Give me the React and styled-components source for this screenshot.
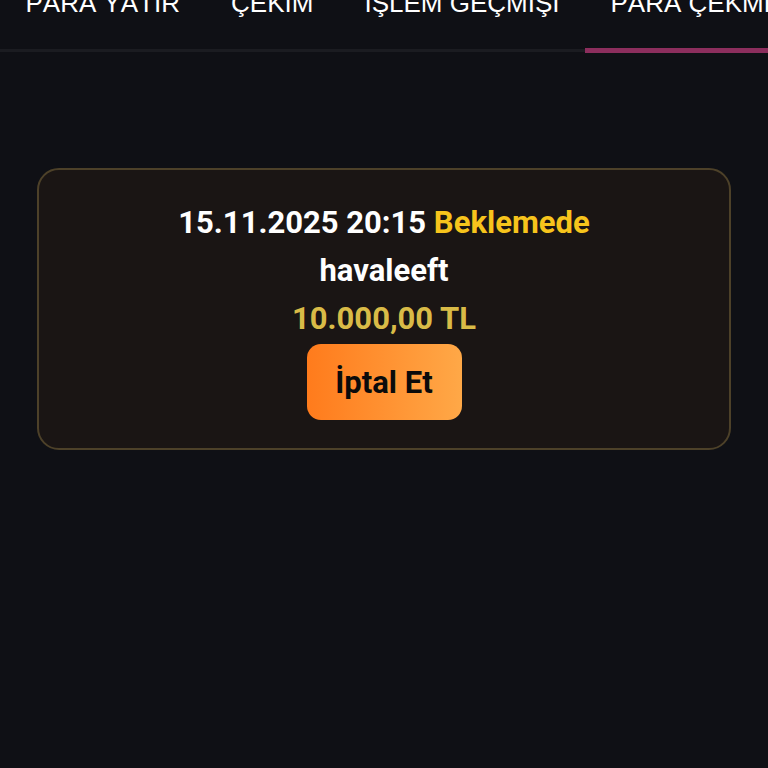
import React from "react";
import styled, { createGlobalStyle } from "styled-components";

const Global = createGlobalStyle`
  html, body { margin: 0; padding: 0; background: #0f1015; }
  body { font-family: Roboto, "Liberation Sans", sans-serif; overflow: hidden; }
  * { box-sizing: border-box; }
`;

const Page = styled.div`
  width: 768px;
  height: 768px;
  background: #0f1015;
  overflow: hidden;
`;

const TabBar = styled.div`
  display: flex;
  margin-top: -17px;
  border-bottom: 3px solid #1b1c21;
  white-space: nowrap;
`;

const Tab = styled.div`
  flex: none;
  padding: 0 25.5px 26px;
  font-family: "Liberation Sans", Arial, sans-serif;
  font-size: 26px;
  font-kerning: none;
  line-height: 40px;
  color: #ffffff;
  position: relative;
  &::after {
    content: "";
    position: absolute;
    left: 0;
    right: 0;
    bottom: -4px;
    height: 5px;
    background: ${(p) => (p.$active ? "#8c2e5d" : "transparent")};
  }
`;

const Content = styled.div`
  padding: 116px 37px 0;
`;

const Card = styled.div`
  border: 2px solid #4d4129;
  border-radius: 22px;
  background: #1a1514;
  padding: 29px 20px 28px;
  display: flex;
  flex-direction: column;
  align-items: center;
`;

const Line = styled.div`
  font-size: 31px;
  font-weight: 700;
  line-height: 48px;
  color: ${(p) => p.$color || "#ffffff"};
`;

const Status = styled.span`
  color: #f7c41c;
`;

const Button = styled.button`
  margin-top: 1px;
  width: 155px;
  height: 76px;
  border: none;
  border-radius: 14px;
  background: linear-gradient(90deg, #ff7b1c 0%, #ffa847 100%);
  color: #0b0b0b;
  font-family: Roboto, "Liberation Sans", sans-serif;
  font-size: 31px;
  font-weight: 700;
  cursor: pointer;
`;

export default function App() {
  return (
    <Page>
      <Global />
      <TabBar>
        <Tab>PARA YATIR</Tab>
        <Tab>ÇEKİM</Tab>
        <Tab>İŞLEM GEÇMİŞİ</Tab>
        <Tab $active>PARA ÇEKME TALEPLERİ</Tab>
      </TabBar>
      <Content>
        <Card>
          <Line>
            15.11.2025 20:15 <Status>Beklemede</Status>
          </Line>
          <Line>havaleeft</Line>
          <Line $color="#d9bb47">10.000,00 TL</Line>
          <Button>İptal Et</Button>
        </Card>
      </Content>
    </Page>
  );
}
